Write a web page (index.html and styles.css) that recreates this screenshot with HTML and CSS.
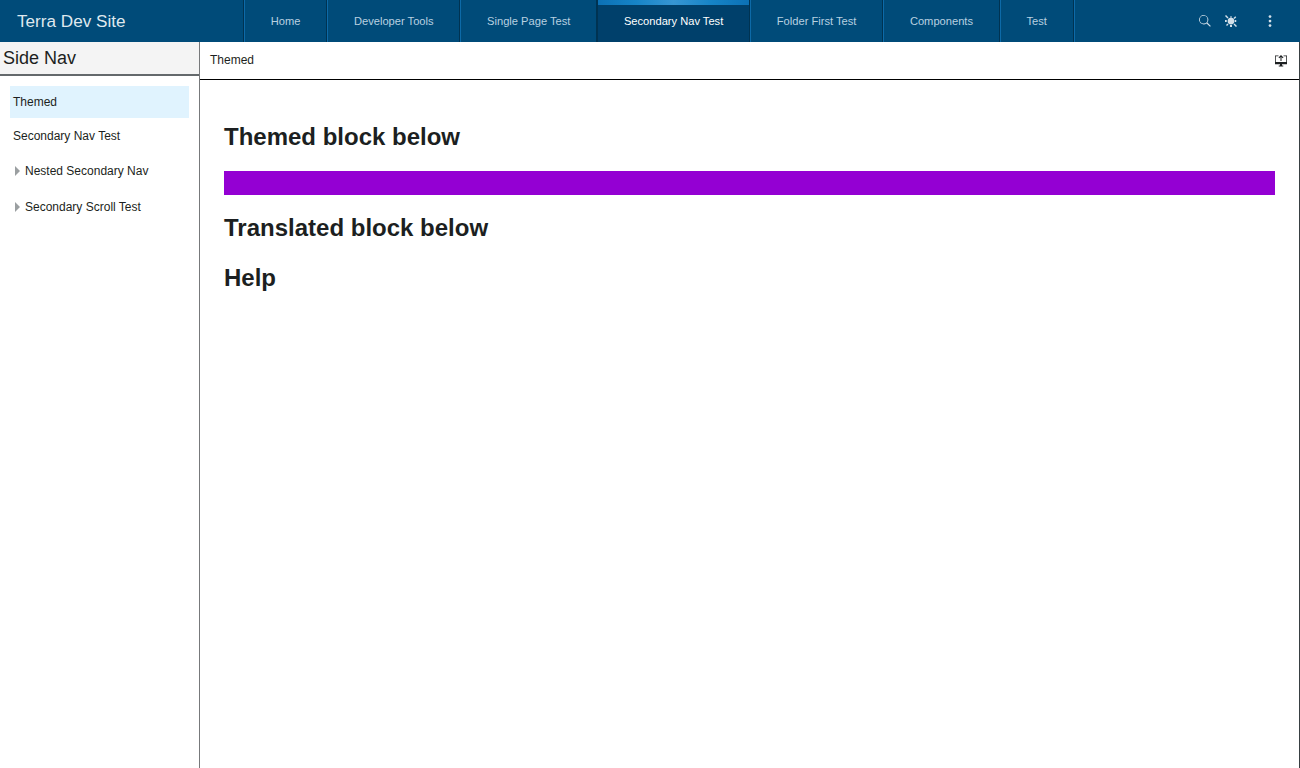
FILE: index.html
```html
<!DOCTYPE html>
<html lang="en">
<head>
<meta charset="utf-8">
<title>Terra Dev Site</title>
<link rel="stylesheet" href="styles.css">
</head>
<body>
<header class="header">
  <div class="brand">Terra Dev Site</div>
  <nav class="tabs">
    <a class="tab">Home</a>
    <a class="tab">Developer Tools</a>
    <a class="tab">Single Page Test</a>
    <a class="tab active">Secondary Nav Test</a>
    <a class="tab">Folder First Test</a>
    <a class="tab">Components</a>
    <a class="tab last">Test</a>
  </nav>
  <div class="utilities">
    <svg class="icon" viewBox="0 0 48 48"><path d="M47.3 44.2 33.4 30.3A18.5 18.5 0 1 0 30.2 33.5L44.1 47.4ZM18.7 33.8a15.2 15.2 0 1 1 0-30.4 15.2 15.2 0 0 1 0 30.4Z"/></svg>
    <svg class="icon" viewBox="0 0 48 48"><circle cx="24" cy="24" r="13.5"/><path d="M4 0 14 10 10 14 0 4ZM41 5 45 9 38 16 34 12ZM0 20H7V28H0ZM39 20H45V28H39ZM20 40H28V48H20ZM10 34 14 38 8 44 4 40ZM38 34 48 44 44 48 34 38ZM22 4H26V12H22Z"/></svg>
    <svg class="icon menu" viewBox="0 0 48 48"><circle cx="24" cy="6" r="5.5"/><circle cx="24" cy="24" r="5.5"/><circle cx="24" cy="42" r="5.5"/></svg>
  </div>
</header>
<div class="body">
  <aside class="side">
    <h2 class="side-title">Side Nav</h2>
    <ul class="menu-list">
      <li class="item selected">Themed</li>
      <li class="item">Secondary Nav Test</li>
      <li class="item folder"><svg class="caret" viewBox="0 0 5 10"><path d="M0 0 5 5 0 10Z"/></svg>Nested Secondary Nav</li>
      <li class="item folder"><svg class="caret" viewBox="0 0 5 10"><path d="M0 0 5 5 0 10Z"/></svg>Secondary Scroll Test</li>
    </ul>
  </aside>
  <main class="main">
    <div class="toolbar">
      <span>Themed</span>
      <svg class="icon" viewBox="0 0 48 48"><path d="M0 2H14V5H3V28H45V5H34V2H48V37H28V42H33V46H15V42H20V37H0ZM24 0 34 10 31 13 26 8V24H22V8L17 13 14 10Z"/></svg>
    </div>
    <div class="content">
      <h1>Themed block below</h1>
      <div class="themed-block"></div>
      <h1>Translated block below</h1>
      <h1>Help</h1>
    </div>
  </main>
</div>
</body>
</html>
```

FILE: styles.css
```css
* { box-sizing: border-box; }
body {
  margin: 0;
  height: 768px;
  display: flex;
  flex-direction: column;
  overflow: hidden;
  font-family: "Liberation Sans", Arial, sans-serif;
  font-size: 12px;
  color: #1c1f21;
  background: #fff;
}
.header {
  display: flex;
  flex: none;
  height: 42px;
  background: #004b79;
}
.brand {
  width: 243px;
  padding-left: 17px;
  font-size: 17.14px;
  line-height: 42px;
  color: #dfe8ee;
}
.tabs {
  display: flex;
  border-left: 1px solid #003352;
}
.tab {
  padding: 0 25.78px;
  border-left: 1px solid #0d6aa8;
  border-right: 1px solid #003352;
  font-size: 11.14px;
  line-height: 42px;
  color: #b8d0e0;
}
.tab.active {
  border-left-color: #003352;
  color: #fff;
  background: linear-gradient(90deg, #0c71b5, #1684c7 25%, #3796d3 50%, #1684c7 75%, #0c71b5) 0 0 / 100% 5px no-repeat #00406b;
}
.tab.last { box-shadow: 1px 0 0 #0d6aa8; }
.utilities {
  display: flex;
  align-items: center;
  margin-left: auto;
  padding-right: 24px;
  gap: 14px;
}
.icon { width: 12px; height: 12px; fill: #d3e0e9; }
.menu { margin-left: 13px; }
.body { display: flex; flex: 1; min-height: 0; border-right: 1px solid #383f42; }
.side { width: 200px; flex: none; border-right: 1px solid #77797b; }
.side-title {
  margin: 0;
  height: 34px;
  padding-left: 3px;
  border-bottom: 2px solid #64696c;
  background: #f4f4f4;
  font-size: 18px;
  font-weight: 400;
  line-height: 32px;
}
.menu-list { margin: 0; padding: 10px 10px 0; list-style: none; }
.item { display: flex; align-items: center; height: 32px; margin-bottom: 2px; padding-left: 3px; }
.item.selected { background: #e0f3fe; }
.item.folder { height: 34px; padding-left: 5px; }
.caret { width: 5px; height: 10px; margin-right: 5px; fill: #9b9fa1; }
.main { flex: 1; }
.toolbar {
  display: flex;
  align-items: center;
  justify-content: space-between;
  height: 38px;
  padding: 0 12px 0 10px;
  border-bottom: 1px solid #000;
}
.toolbar span { padding-bottom: 2px; }
.toolbar .icon { fill: #1c1f21; }
.content { padding: 43px 24px 0; }
.content h1 { margin: 0 0 23px; font-size: 24px; line-height: 27px; }
.themed-block { height: 24px; margin: -2px 0 19px; background: #9400d3; }
```
